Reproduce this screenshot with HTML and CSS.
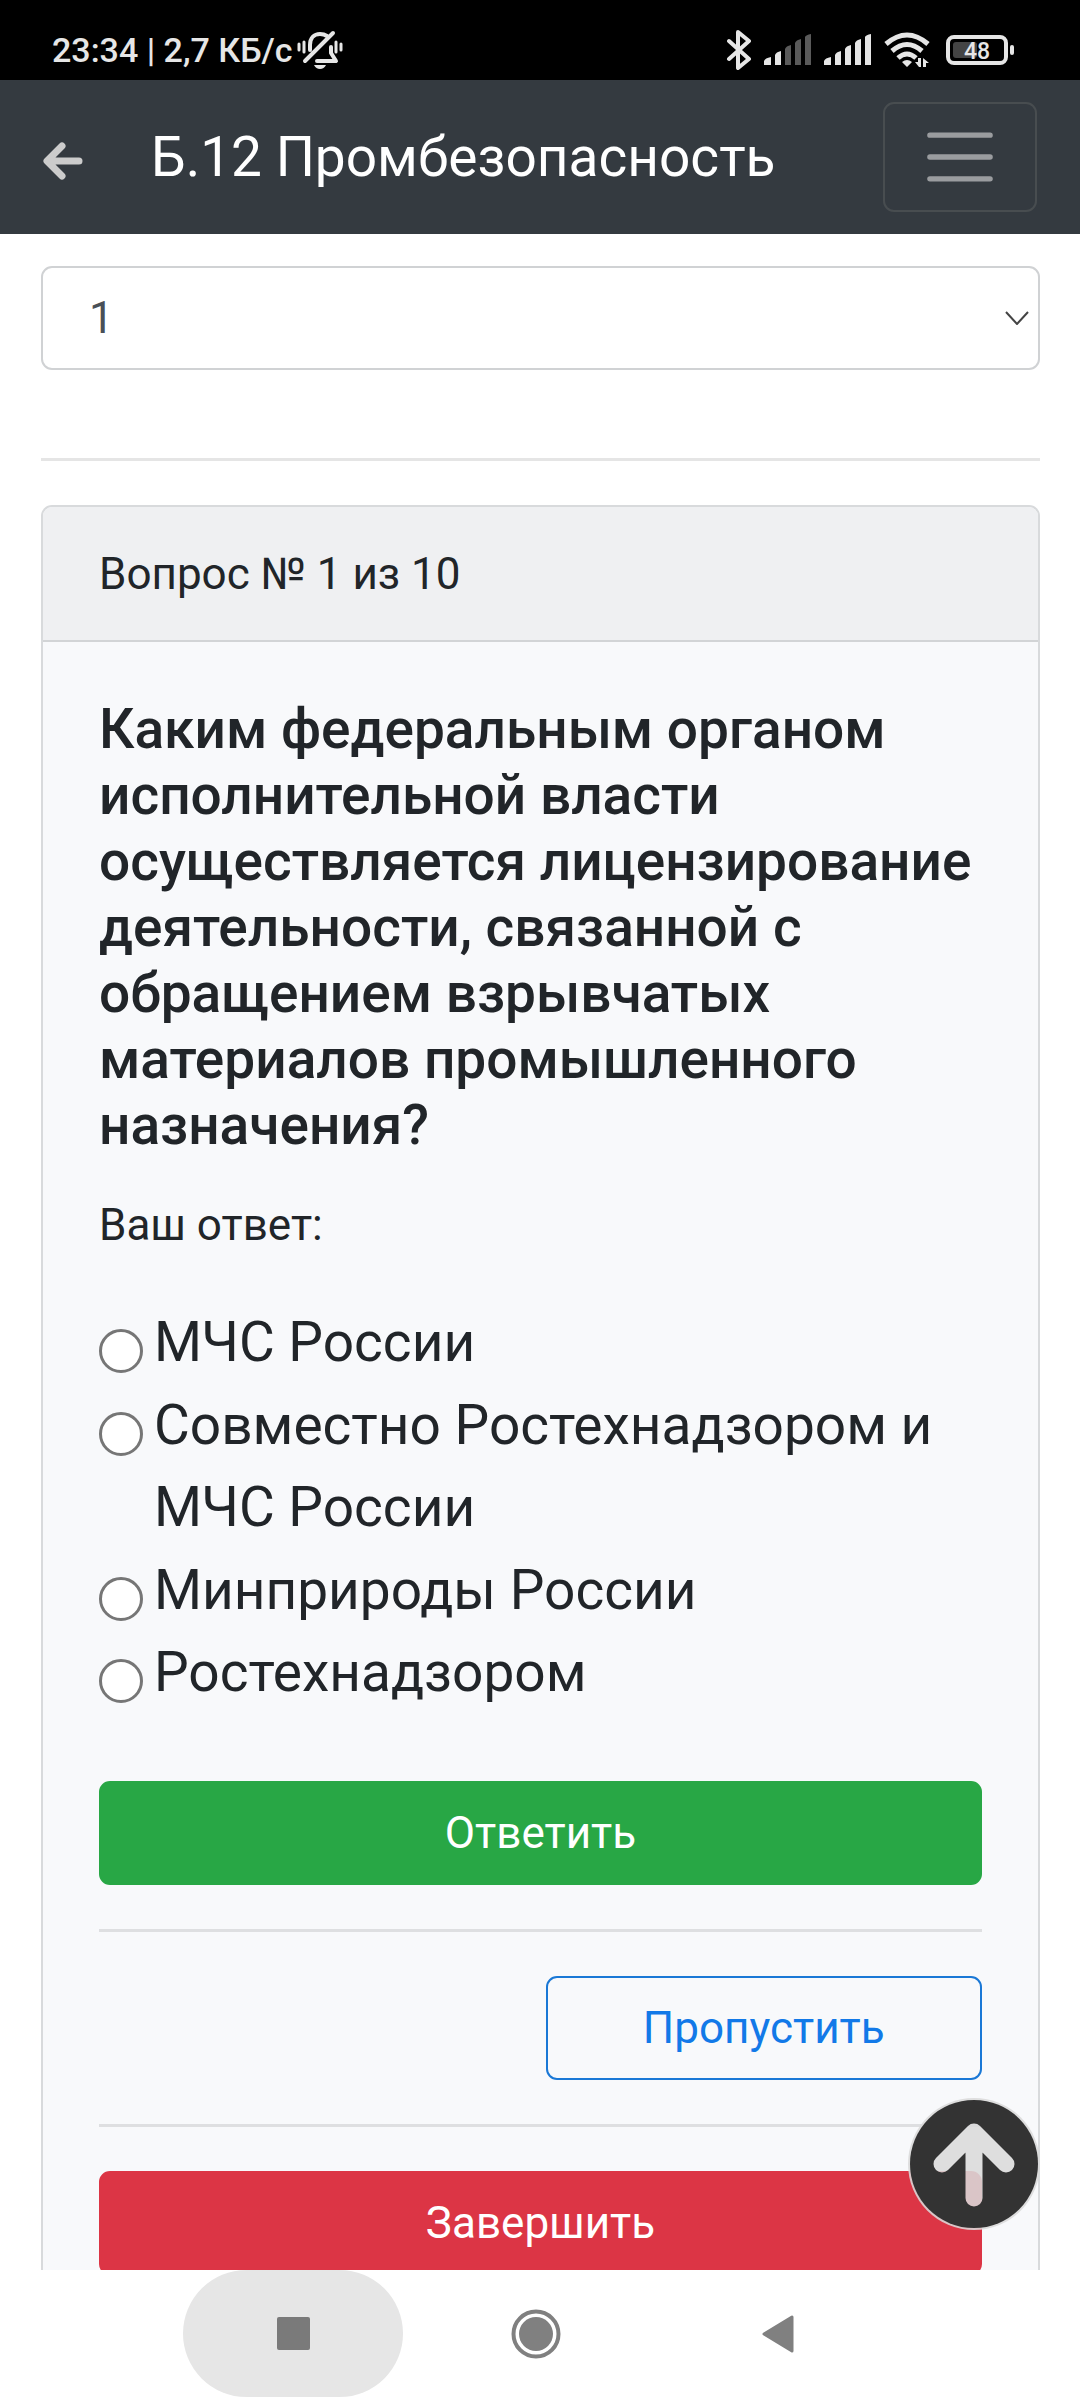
FILE: index.html
```html
<!DOCTYPE html>
<html lang="ru">
<head>
<meta charset="utf-8">
<meta name="viewport" content="width=device-width, initial-scale=1">
<title>Б.12 Промбезопасность</title>
<link rel="stylesheet" href="styles.css">
</head>
<body>
<div class="status">
  <span class="status-text">23:34 | 2,7 КБ/с</span>
  <svg class="bell" viewBox="0 0 46 40" width="46" height="40" fill="none" stroke="#e6e6e6" stroke-width="4" stroke-linecap="round" stroke-linejoin="round">
    <path d="M13 20V15C13 8 17 4 23 4Q27 4 30 6M34 17V23L39 31H20M8 31 36 3"/>
    <path d="M2 14V20M7 12V22M39 12V22M44 14V20" stroke-width="3"/>
    <path d="M17 35H29Q27 39 23 39T17 35Z" fill="#e6e6e6" stroke="none"/>
  </svg>
  <div class="status-icons">
    <svg viewBox="0 0 26 40" width="26" height="40" fill="none" stroke="#e6e6e6" stroke-width="4" stroke-linejoin="round" stroke-linecap="round"><path d="M3 11 23 29 12 38V2L23 11 3 29"/></svg>
    <svg class="signal" viewBox="0 0 48 32" width="48" height="32" fill="#e6e6e6"><path d="M0 27Q1 24 7 23V31H0ZM11 21Q12 18 17 17V31H11Z"/><path fill="#5a5a5a" d="M21 15Q22 12 27 11V31H21ZM31 9Q32 6 37 5V31H31ZM41 3Q42 1 47 0V31H41Z"/></svg>
    <svg class="signal" viewBox="0 0 48 32" width="48" height="32" fill="#e6e6e6"><path d="M0 27Q1 24 7 23V31H0ZM11 21Q12 18 17 17V31H11ZM21 15Q22 12 27 11V31H21ZM31 9Q32 6 37 5V31H31ZM41 3Q42 1 47 0V31H41Z"/></svg>
    <svg class="wifi" viewBox="0 0 46 36" width="46" height="36" fill="none" stroke="#e6e6e6" stroke-width="5"><path d="M2 12Q23-6 44 12M8 19Q23 6 38 19M14 26Q23 18 32 26"/><path fill="#e6e6e6" stroke="none" d="M18 30Q23 26 28 30L23 35ZM31 30H34V26H37V35H35ZM39 26 45 31H42V35H39Z"/></svg>
    <svg class="battery" viewBox="0 0 68 30" width="68" height="30"><rect x="2" y="2" width="58" height="26" rx="6" fill="none" stroke="#e6e6e6" stroke-width="4"/><rect x="7" y="7" width="24" height="16" rx="3" fill="#444"/><rect x="64" y="10" width="4" height="10" rx="2" fill="#e6e6e6"/><text x="31" y="24" text-anchor="middle" class="battery-text">48</text></svg>
  </div>
</div>

<header class="navbar">
  <button class="back" type="button" aria-label="Назад">
    <svg viewBox="0 0 40 38" width="40" height="38" fill="none" stroke="#ccc" stroke-width="7" stroke-linecap="round" stroke-linejoin="round"><path d="M36 19H5M19 4 4 19 19 34"/></svg>
  </button>
  <h1 class="title">Б.12 Промбезопасность</h1>
  <button class="toggler" type="button" aria-label="Меню">
    <svg viewBox="0 0 30 30" width="82" height="82" fill="none" stroke="#9a9c9f" stroke-width="2" stroke-linecap="round"><path d="M4 7h22M4 15h22M4 23h22"/></svg>
  </button>
</header>

<main class="content">
  <div class="select-wrap">
    <select class="select" aria-label="Номер билета"><option>1</option></select>
    <svg class="chevron" viewBox="0 0 24 14" width="24" height="14" fill="none" stroke="#444" stroke-width="2"><path d="M1 1 12 13 23 1"/></svg>
  </div>
  <hr class="rule">
  <section class="card">
    <div class="card-header">Вопрос № 1 из 10</div>
    <form class="card-body">
      <h2 class="question">Каким федеральным органом исполнительной власти осуществляется лицензирование деятельности, связанной с обращением взрывчатых материалов промышленного назначения?</h2>
      <fieldset class="answers">
        <legend class="legend">Ваш ответ:</legend>
        <label class="answer"><input class="radio" type="radio" name="answer"><span>МЧС России</span></label>
        <label class="answer"><input class="radio" type="radio" name="answer"><span>Совместно Ростехнадзором и МЧС России</span></label>
        <label class="answer"><input class="radio" type="radio" name="answer"><span>Минприроды России</span></label>
        <label class="answer"><input class="radio" type="radio" name="answer"><span>Ростехнадзором</span></label>
      </fieldset>
      <button class="btn btn-success" type="button">Ответить</button>
      <hr class="rule">
      <button class="btn btn-outline" type="button">Пропустить</button>
      <hr class="rule">
      <button class="btn btn-danger" type="button">Завершить</button>
    </form>
  </section>
  <button class="to-top" type="button" aria-label="Наверх">
    <svg viewBox="0 0 132 132" width="132" height="132">
      <mask id="arrow"><rect width="132" height="132" fill="#fff"/><path d="M66 100V34M34 66 66 34 98 66" fill="none" stroke="#000" stroke-width="17" stroke-linecap="round" stroke-linejoin="round"/></mask>
      <circle cx="66" cy="66" r="64" fill="#333" mask="url(#arrow)"/>
    </svg>
  </button>
</main>

<nav class="system-nav">
  <button class="nav-btn recent" type="button" aria-label="Недавние"><svg viewBox="0 0 33 33" width="33" height="33"><rect width="33" height="33" rx="2" fill="#7a7a7a"/></svg></button>
  <button class="nav-btn" type="button" aria-label="Домой"><svg viewBox="0 0 50 50" width="50" height="50"><circle cx="25" cy="25" r="22.5" fill="none" stroke="#808080" stroke-width="4"/><circle cx="25" cy="25" r="17" fill="#808080"/></svg></button>
  <button class="nav-btn" type="button" aria-label="Назад"><svg viewBox="0 0 34 38" width="34" height="38"><path d="M3 19 31 2V36Z" fill="#808080" stroke="#808080" stroke-width="3" stroke-linejoin="round"/></svg></button>
</nav>
</body>
</html>
```
FILE: styles.css
```css
* { box-sizing: border-box; }

body {
  margin: 0;
  height: 100vh;
  display: flex;
  flex-direction: column;
  overflow: hidden;
  background: #fff;
  color: #212529;
  font: 44px/66px Roboto, sans-serif;
}

button, select {
  font: inherit;
  color: inherit;
  margin: 0;
}

svg { display: block; flex: none; }

.status {
  flex: none;
  height: 80px;
  padding: 20px 66px 0 52px;
  display: flex;
  align-items: center;
  background: #000;
  color: #e6e6e6;
}
.status-text { font-size: 34px; font-weight: 500; line-height: 60px; }
.bell { margin-left: 4px; }
.status-icons { margin-left: auto; display: flex; align-items: center; gap: 12px; }
.battery { margin-left: 4px; }
.battery-text { font: 500 23px Roboto, sans-serif; fill: #e6e6e6; }

.navbar {
  flex: none;
  padding: 22px 43px;
  display: flex;
  align-items: center;
  background: #343a40;
  color: #fff;
}
.back { padding: 8px 0 0; border: 0; background: none; }
.title { flex: 1; margin: 0 0 0 68px; font-size: 55px; font-weight: 400; line-height: 80px; }
.toggler {
  width: 154px;
  height: 110px;
  padding: 0;
  display: grid;
  place-items: center;
  border: 2px solid #484d50;
  border-radius: 11px;
  background: none;
}

.content {
  flex: 1;
  min-height: 0;
  overflow: hidden;
  position: relative;
  padding: 32px 40px 0 41px;
}
.select-wrap { display: grid; align-items: center; margin-bottom: 88px; }
.select, .chevron { grid-area: 1 / 1; }
.select {
  width: 100%;
  height: 104px;
  padding: 0 46px;
  appearance: none;
  border: 2px solid #d0d2d4;
  border-radius: 11px;
  background: #fff;
  color: #495057;
}
.chevron { justify-self: end; margin-right: 11px; pointer-events: none; }
.rule { height: 3px; margin: 44px 0; border: 0; background: rgba(0, 0, 0, .1); }

.card { border: 2px solid #d8dadc; border-radius: 11px; background: #f8f9fb; }
.card-header {
  padding: 34px 56px 33px;
  border-bottom: 2px solid #d2d4d6;
  border-radius: 9px 9px 0 0;
  background: #eff0f2;
}
.card-body { padding: 54px 56px; }
.question { margin: 0 0 34px; font-size: 55px; font-weight: 500; line-height: 66px; }
.answers { margin: 0 0 67px; padding: 0; border: 0; min-width: 0; }
.legend { padding: 0; margin-bottom: 43px; }
.answer { display: flex; gap: 11px; font-size: 55px; line-height: 1.5; }
.radio {
  flex: none;
  width: 44px;
  height: 44px;
  margin: 28px 0 0;
  appearance: none;
  border: 3px solid #767676;
  border-radius: 50%;
  background: #fff;
}
.radio:checked { box-shadow: inset 0 0 0 8px #fff; background: #767676; }

.btn {
  display: block;
  width: 100%;
  height: 104px;
  padding: 0;
  border: 2px solid;
  border-radius: 11px;
}
.btn-success { background: #28a745; border-color: #28a745; color: #fff; }
.btn-danger { background: #dc3545; border-color: #dc3545; color: #fff; }
.btn-outline { width: calc(50% - 5px); margin-left: auto; background: none; border-color: #1a78d6; color: #1279e8; }

.to-top {
  position: absolute;
  right: 40px;
  bottom: 40px;
  padding: 0;
  border: 0;
  border-radius: 50%;
  background: rgba(218, 218, 218, .88);
}

.system-nav {
  flex: none;
  height: 130px;
  padding: 0 192px 0 183px;
  display: flex;
  align-items: flex-start;
  justify-content: space-between;
  background: #fff;
}
.nav-btn {
  width: 220px;
  height: 127px;
  padding: 0;
  display: grid;
  place-items: center;
  border: 0;
  border-radius: 64px;
  background: none;
}
.recent { background: #e6e6e6; }
```
